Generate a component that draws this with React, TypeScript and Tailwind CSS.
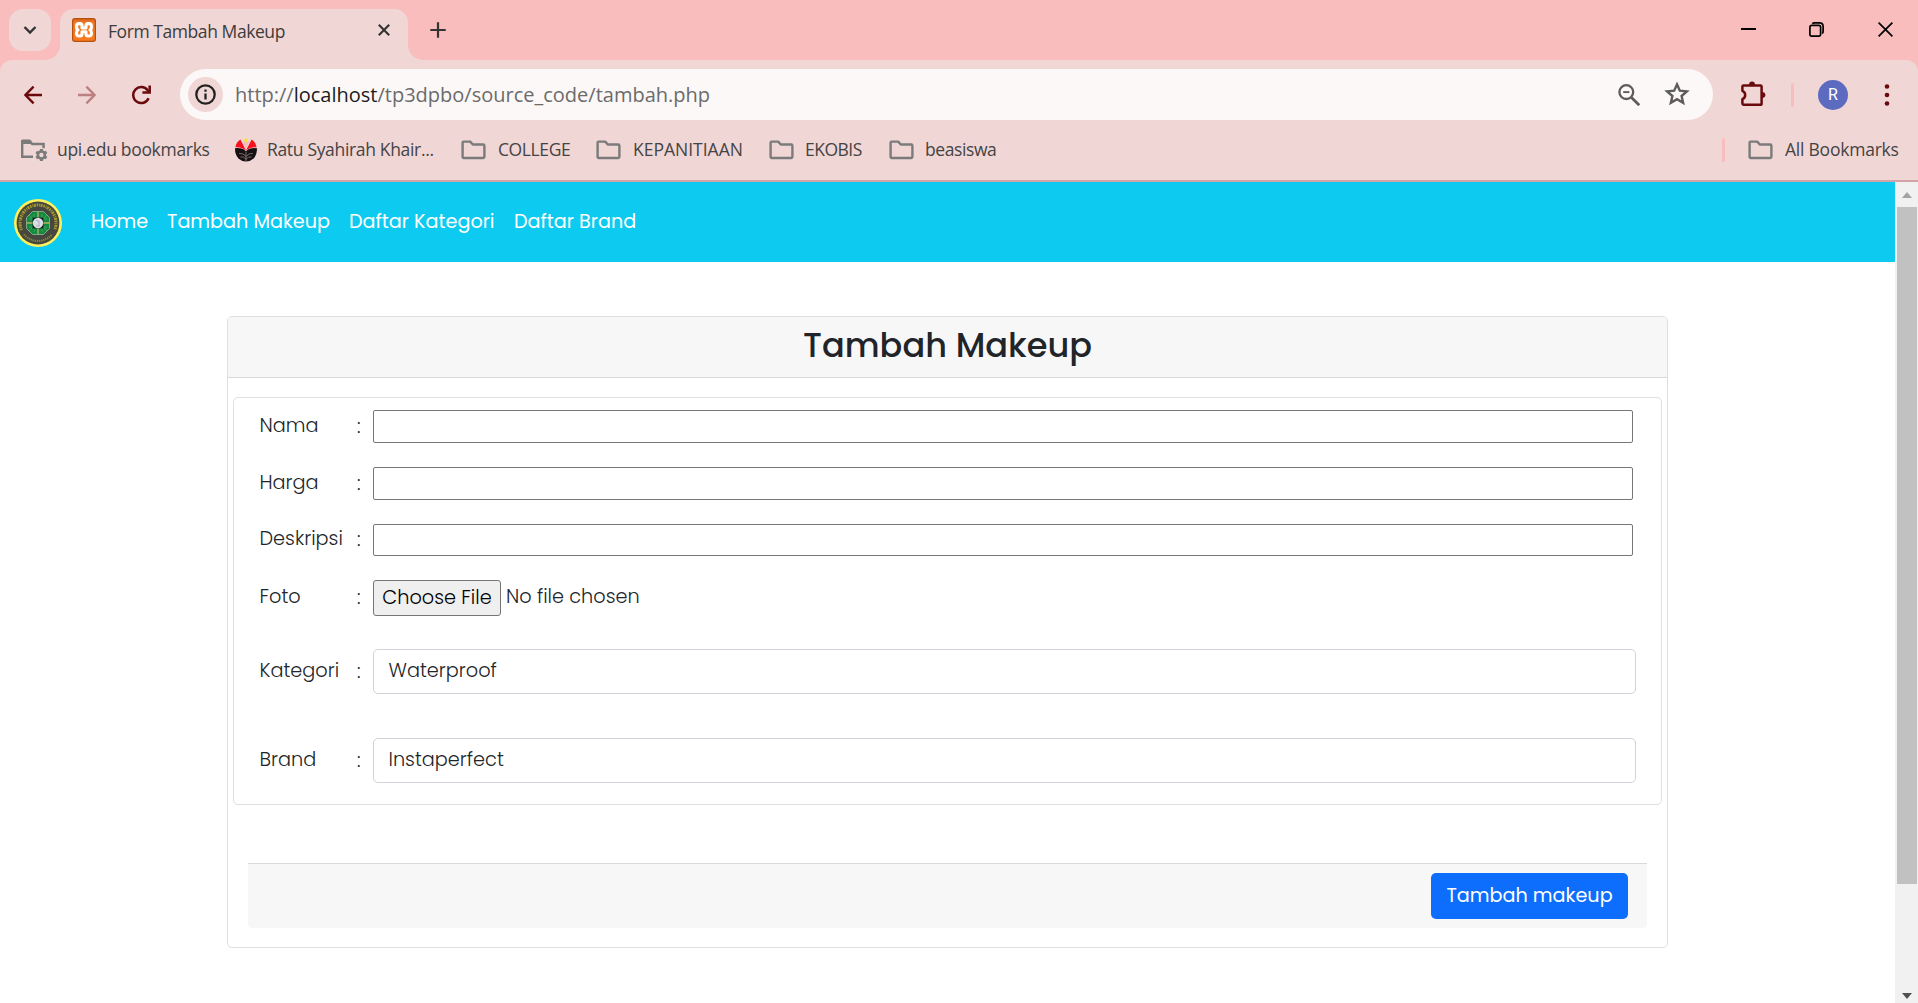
import type { ReactNode } from "react";

const POPPINS = "font-['Poppins','Inter',sans-serif]";
const SEGOE = "font-['Open_Sans','Noto_Sans',sans-serif]";

function Folder() {
  return (
    <svg className="h-[20px] w-[25px] shrink-0" viewBox="0 0 25 20" fill="none" stroke="#7b7b7b" strokeWidth="2.4" strokeLinejoin="round">
      <path d="M1.6 2.6Q1.6 1.6 2.6 1.6H9.2L11.8 4.5H22.2Q23.4 4.5 23.4 5.7V16.8Q23.4 18 22.2 18H2.8Q1.6 18 1.6 16.8Z" />
    </svg>
  );
}

function ManagedFolder() {
  return (
    <svg className="h-[24px] w-[28px] shrink-0" viewBox="0 0 28 24" fill="none" stroke="#7b7b7b" strokeWidth="2.4">
      <path d="M13 18.8H2.2V3.2H9.5L12.2 6H23.6V10.2" />
      <path d="M1.1 5.9V3.2Q1.1 1.6 2.7 1.6H9.3Q10.4 1.6 11 2.5L13 5.9Z" fill="#7b7b7b" stroke="none" />
      <circle cx="21.4" cy="17" r="3.5" strokeWidth="2.6" />
      <path d="M21.4 11V13.4M21.4 20.6V23M16.2 14L18.3 15.2M24.5 18.8L26.6 20M16.2 20L18.3 18.8M24.5 15.2L26.6 14" strokeWidth="3" />
    </svg>
  );
}

function UniversityIcon() {
  return (
    <svg className="h-[24px] w-[24px] shrink-0" viewBox="0 0 24 24">
      <path d="M1 10.2Q8.6 9.4 12 13.4Q15.4 9.4 23 10.2Q23.2 16.6 19.6 20.4Q16.4 23.4 12 23.4Q7.6 23.4 4.4 20.4Q.8 16.6 1 10.2Z" fill="#161113" />
      <path d="M6.4 1.6L12 12.6L17.6 1.6Q21.6 4 22.6 9.2Q15.4 8.8 12 12.8Q8.6 8.8 1.4 9.2Q2.4 4 6.4 1.6Z" fill="#f6131f" />
      <path d="M8.6 3L12 11L15.4 3L13.5 4H10.5Z" fill="#f7bcbc" />
      <circle cx="12" cy="2.4" r="1.8" fill="#f5e42a" />
      <path d="M12 14V23M5 15.4Q9.4 15 12 18.4Q14.6 15 19 15.4M6.4 19Q9.5 18 12 21.2Q14.5 18 17.6 19" fill="none" stroke="#a08d90" strokeWidth=".7" />
    </svg>
  );
}

function XamppIcon() {
  return (
    <svg className="h-6 w-6 shrink-0" viewBox="0 0 24 24">
      <defs>
        <linearGradient id="xampp" x1="0" y1="0" x2="0" y2="1">
          <stop offset="0" stopColor="#d9651b" />
          <stop offset=".2" stopColor="#f0792a" />
          <stop offset="1" stopColor="#f87a1c" />
        </linearGradient>
      </defs>
      <rect x=".6" y=".6" width="22.8" height="22.8" rx="2.4" fill="url(#xampp)" stroke="#b5520f" strokeWidth="1.2" />
      <path
        d="M10 10H14V7.6Q14 5.6 16 5.6H17Q19.4 5.6 19.4 8V9.4Q19.4 10.8 18 12Q19.4 13 19.4 14.6V15.6Q19.4 18 17 18H16Q14 18 14 16V13.8H10V16Q10 18 8 18H7Q4.6 18 4.6 15.6V14.6Q4.6 13 6 12Q4.6 10.8 4.6 9.4V8Q4.6 5.6 7 5.6H8Q10 5.6 10 7.6Z"
        fill="none"
        stroke="#fff"
        strokeWidth="3.1"
        strokeLinejoin="round"
      />
    </svg>
  );
}

function FacultyLogo() {
  return (
    <svg className="h-12 w-12 shrink-0" viewBox="0 0 48 48" fill="none">
      <circle cx="24" cy="24" r="24" fill="#fdf05c" />
      <circle cx="24" cy="24" r="21.4" fill="#46483f" />
      <path d="M7.4 31A18 18 0 1 1 40.6 31" stroke="#a79a2b" strokeWidth="3" strokeDasharray="1.5 .9 .8 .7 2 .9" />
      <path d="M10 35.4A18.2 18.2 0 0 0 38 35.4" stroke="#8d842f" strokeWidth="2" strokeDasharray="1.3 .8" />
      <path d="M18.5 12.5H29.5L35.5 18.5V29.5L29.5 35.5H18.5L12.5 29.5V18.5Z" fill="#128a3f" stroke="#8fae8c" strokeWidth=".9" />
      <path d="M24 13V35M13 24H35" stroke="#bcae62" strokeWidth="1.3" />
      <path d="M15 16L19 20M33 16L29 20M15 32L19 28M33 32L29 28M20 15V19M28 15V19M20 33V29M28 33V29M15 20H18M15 28H18M33 20H30M33 28H30" stroke="#4da765" strokeWidth=".8" />
      <rect x="18.6" y="18.6" width="10.8" height="10.8" fill="#15191b" />
      <circle cx="24" cy="24" r="5.2" fill="#dcdde6" />
      <path d="M22 21.5L25 22V26.5M22 27H26" stroke="#a9adba" strokeWidth="1" />
    </svg>
  );
}

function Bookmark({ icon, label, className }: { icon: ReactNode; label: string; className: string }) {
  return (
    <div className={`flex shrink-0 items-center whitespace-nowrap ${className}`}>
      {icon}
      <span className="-mt-[2px]">{label}</span>
    </div>
  );
}

function TabStrip() {
  return (
    <div className="flex h-[60px] bg-[#f9bdbd] text-[#3c3c3c]">
      <div className="mt-[9px] ml-[9px] flex h-[42px] w-[42px] items-center justify-center rounded-[14px] bg-[#f1d6d6]">
        <svg className="h-[10px] w-[14px]" viewBox="0 0 14 10" fill="none" stroke="#333" strokeWidth="2.4">
          <path d="M1.5 2L7 7.5L12.5 2" />
        </svg>
      </div>
      <div className="relative mt-[9px] ml-[9px] flex h-[51px] w-[348px] items-start rounded-t-[14px] bg-[#f1d6d6] pt-[9px] pl-[12px]">
        <svg className="absolute bottom-0 -left-[15px] h-[15px] w-[15px]" viewBox="0 0 15 15">
          <path d="M15 0V15H0A15 15 0 0 0 15 0Z" fill="#f1d6d6" />
        </svg>
        <svg className="absolute -right-[15px] bottom-0 h-[15px] w-[15px]" viewBox="0 0 15 15">
          <path d="M0 0V15H15A15 15 0 0 1 0 0Z" fill="#f1d6d6" />
        </svg>
        <XamppIcon />
        <span className={`ml-[12px] w-[270px] text-[17.5px] leading-[26px] tracking-[-0.43px] whitespace-nowrap ${SEGOE}`}>Form Tambah Makeup</span>
        <svg className="mt-[6px] h-[12px] w-[12px]" viewBox="0 0 12 12" stroke="#333" strokeWidth="2.1">
          <path d="M.8 .8L11.2 11.2M11.2 .8L.8 11.2" />
        </svg>
      </div>
      <svg className="mt-[22px] ml-[22px] h-[16px] w-[16px]" viewBox="0 0 16 16" stroke="#333" strokeWidth="2.2">
        <path d="M8 .3V15.7M.3 8H15.7" />
      </svg>
      <div className="mr-[25px] ml-auto flex items-start gap-[54px] pt-[22px]">
        <svg className="-mr-px h-[15px] w-[15px]" viewBox="0 0 15 15" stroke="#000" strokeWidth="2">
          <path d="M0 7H15" />
        </svg>
        <svg className="h-[15px] w-[15px]" viewBox="0 0 15 15" fill="none" stroke="#000" strokeWidth="1.7">
          <rect x=".9" y="3.4" width="10.7" height="10.7" rx="1.8" />
          <path d="M3.4 1.7Q4 .9 5.4 .9H10.5Q14.1 .9 14.1 4.5V9.6Q14.1 11 13.3 11.6" />
        </svg>
        <svg className="h-[15px] w-[15px]" viewBox="0 0 15 15" stroke="#000" strokeWidth="1.7">
          <path d="M.6 .6L14.4 14.4M14.4 .6L.6 14.4" />
        </svg>
      </div>
    </div>
  );
}

function Toolbar() {
  return (
    <div className="flex h-[69px] items-center">
      <svg className="ml-[24px] h-[20px] w-[18px]" viewBox="0 0 18 20" fill="none" stroke="#6a0a0d" strokeWidth="2.4">
        <path d="M18 10H2M9.6 1.6L1.4 10L9.6 18.4" />
      </svg>
      <svg className="ml-[36px] h-[20px] w-[18px]" viewBox="0 0 18 20" fill="none" stroke="#bd8081" strokeWidth="2.4">
        <path d="M0 10H16M8.4 1.6L16.6 10L8.4 18.4" />
      </svg>
      <svg className="ml-[35px] h-[20px] w-[20px]" viewBox="0 0 20 20" fill="none" stroke="#6a0a0d" strokeWidth="2.5">
        <path d="M17.6 13.2A8 8 0 1 1 16.6 5.2L18 7.2" />
        <path d="M18.7 .6V7.6H11.4" />
      </svg>
      <div className="ml-[29px] flex h-[51px] w-[1533px] shrink-0 items-center rounded-full bg-[#fcf8f7] pl-[8px]">
        <div className="flex h-[35px] w-[35px] items-center justify-center rounded-full bg-[#f1d6d6]">
          <svg className="h-[21px] w-[21px]" viewBox="0 0 21 21" fill="none" stroke="#222" strokeWidth="2.3">
            <circle cx="10.5" cy="10.5" r="9.2" />
            <path d="M10.5 9.6V15.6M10.5 5.4V7.8" />
          </svg>
        </div>
        <span className={`ml-[12px] text-[20px] text-[#6b6b6b] ${SEGOE}`}>
          http://<span className="text-[#1c1c1c]">localhost</span>/tp3dpbo/source_code/tambah.php
        </span>
        <svg className="ml-auto h-[22px] w-[22px]" viewBox="0 0 22 22" fill="none" stroke="#5c5c5c" strokeWidth="2.3">
          <circle cx="8.3" cy="8.1" r="6.9" />
          <path d="M13.2 13.2L21.2 21.2" strokeWidth="2.7" />
          <path d="M5.2 8.1H11.4" strokeWidth="1.9" />
        </svg>
        <svg className="mr-[23px] mb-[2px] ml-[24px] h-[25px] w-[26px]" viewBox="0 0 25 24" fill="none" stroke="#5c5c5c" strokeWidth="2.3">
          <path d="M12.5 3.2L15.2 9.3L22 10L16.9 14.4L18.4 21L12.5 17.5L6.6 21L8.1 14.4L3 10L9.8 9.3Z" />
        </svg>
      </div>
      <svg className="mb-[2px] ml-[27px] h-[26px] w-[27px]" viewBox="0 0 27 26" fill="none" stroke="#6a0a0d" strokeWidth="2.5" strokeLinejoin="round">
        <path d="M3.6 4.4H20.4Q21.6 4.4 21.6 5.6V22.4Q21.6 23.8 20.4 23.8H3.6Q2.4 23.8 2.4 22.6V18.2Q5.2 17 5.2 14Q5.2 11 2.4 9.8V5.6Q2.4 4.4 3.6 4.4Z" />
        <path d="M9 4Q9 .6 12 .6T15 4ZM21.6 11Q25.4 11 25.4 14T21.6 17Z" fill="#6a0a0d" stroke="none" />
      </svg>
      <div className="ml-[24px] h-[24px] w-[3px] rounded-full bg-[#f9bdbd]" />
      <div className="ml-[24px] flex h-[30px] w-[30px] items-center justify-center rounded-full bg-[#5c6bc0] font-['Roboto',sans-serif] text-[16px] text-white">R</div>
      <svg className="ml-[36px] h-[22px] w-[6px]" viewBox="0 0 6 22" fill="#6a0a0d">
        <circle cx="3" cy="2.5" r="2.3" />
        <circle cx="3" cy="11" r="2.3" />
        <circle cx="3" cy="19.5" r="2.3" />
      </svg>
    </div>
  );
}

function BookmarksBar() {
  return (
    <div className={`flex h-[51px] items-center pb-[9px] text-[17.5px] text-[#444] ${SEGOE}`}>
      <Bookmark className="ml-[20px] w-[214px] gap-[9px] tracking-[-0.31px]" icon={<ManagedFolder />} label="upi.edu bookmarks" />
      <Bookmark className="w-[227px] gap-[9px] tracking-[-0.33px]" icon={<UniversityIcon />} label="Ratu Syahirah Khair..." />
      <Bookmark className="w-[135px] gap-[12px] tracking-[-0.4px]" icon={<Folder />} label="COLLEGE" />
      <Bookmark className="w-[173px] gap-[12px]" icon={<Folder />} label="KEPANITIAAN" />
      <Bookmark className="w-[120px] gap-[11px] tracking-[-0.5px]" icon={<Folder />} label="EKOBIS" />
      <Bookmark className="gap-[11px] tracking-[-0.4px]" icon={<Folder />} label="beasiswa" />
      <div className="mr-[23px] ml-auto h-[24px] w-[3px] rounded-full bg-[#f9bdbd]" />
      <Bookmark className="w-[170px] gap-[12px] tracking-[-0.23px]" icon={<Folder />} label="All Bookmarks" />
    </div>
  );
}

function NavBar() {
  return (
    <nav className="flex h-[80px] items-center bg-[#0dcaf0] pt-[2px] pl-[14px] text-[19.2px] whitespace-nowrap text-white">
      <FacultyLogo />
      <div className="mb-[2px] ml-[29px] flex">
        <a className="w-[76px]">Home</a>
        <a className="w-[182px]">Tambah Makeup</a>
        <a className="w-[165px]">Daftar Kategori</a>
        <a>Daftar Brand</a>
      </div>
    </nav>
  );
}

function Row({ label, className, children }: { label: string; className: string; children: ReactNode }) {
  return (
    <div className={`flex items-center ${className}`}>
      <span className="mb-[2px] w-[97.5px] shrink-0">{label}</span>
      <span className="w-[16px] shrink-0">:</span>
      {children}
    </div>
  );
}

function FormCard() {
  return (
    <main className="ml-[227px] flex h-[632px] w-[1441px] flex-col rounded-[5px] border border-[#dfdfdf] bg-white">
      <div className="flex h-[61px] shrink-0 items-center justify-center rounded-t-[4px] border-b border-[#d9d9d9] bg-[#f7f7f7] pb-[2px]">
        <h2 className="text-[33.6px] leading-none font-medium">Tambah Makeup</h2>
      </div>
      <div className="mx-[5px] mt-[19px] flex h-[408px] shrink-0 flex-col rounded-[5px] border border-[#dfdfdf] pl-[25.5px] text-[19.3px] leading-[28px] font-light">
        <Row label="Nama" className="mt-[12px] h-[33px]">
          <input className="h-full w-[1260px] rounded-[2px] border border-[#767676] bg-white" />
        </Row>
        <Row label="Harga" className="mt-[24px] h-[33px]">
          <input className="h-full w-[1260px] rounded-[2px] border border-[#767676] bg-white" />
        </Row>
        <Row label="Deskripsi" className="mt-[24px] h-[32px]">
          <input className="h-full w-[1260px] rounded-[2px] border border-[#767676] bg-white" />
        </Row>
        <Row label="Foto" className="mt-[24px] h-[36px]">
          <button className="h-full w-[128px] rounded-[3px] border border-[#767676] bg-[#efefef] text-black">Choose File</button>
          <span className="-mt-[2px] ml-[5px]">No file chosen</span>
        </Row>
        <Row label="Kategori" className="mt-[33px] h-[45px]">
          <div className="h-full w-[1263px] rounded-[5px] border border-[#ced4da] pt-[7px] pl-[14.5px]">Waterproof</div>
        </Row>
        <Row label="Brand" className="mt-[44px] h-[45px]">
          <div className="h-full w-[1263px] rounded-[5px] border border-[#ced4da] pt-[7px] pl-[14.5px]">Instaperfect</div>
        </Row>
      </div>
      <div className="mx-[20px] mt-[58px] flex h-[65px] shrink-0 justify-end rounded-b-[4px] border-t border-[#d9d9d9] bg-[#f7f7f7] pt-[9px] pr-[19px]">
        <button className="h-[46px] w-[197px] rounded-[5px] bg-[#0d6efd] text-[19.2px] text-white">Tambah makeup</button>
      </div>
    </main>
  );
}

function Scrollbar() {
  return (
    <div className="flex w-[23px] flex-col items-center bg-[#f1f1f1]">
      <svg className="mt-[10px] h-[6px] w-[10px]" viewBox="0 0 10 6" fill="#a3a3a3">
        <path d="M5 0L10 6H0Z" />
      </svg>
      <div className="mt-[9px] h-[677px] w-[20px] bg-[#c1c1c1]" />
      <svg className="mt-auto mb-[4px] h-[6px] w-[10px]" viewBox="0 0 10 6" fill="#505050">
        <path d="M5 6L10 0H0Z" />
      </svg>
    </div>
  );
}

export default function App() {
  return (
    <div className="flex h-[1003px] w-[1918px] flex-col overflow-hidden bg-white">
      <TabStrip />
      <div className="h-[120px] bg-[#f9bdbd]">
        <div className="h-full rounded-t-[12px] bg-[#f1d6d6]">
          <Toolbar />
          <BookmarksBar />
        </div>
      </div>
      <div className="h-[2px] bg-[#d3a3a7]" />
      <div className={`flex flex-1 text-[#212529] ${POPPINS}`}>
        <div className="flex flex-1 flex-col gap-[54px]">
          <NavBar />
          <FormCard />
        </div>
        <Scrollbar />
      </div>
    </div>
  );
}
